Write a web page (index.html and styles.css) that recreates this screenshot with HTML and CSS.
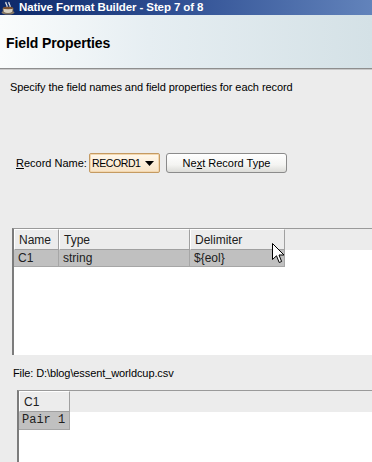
FILE: index.html
```html
<!DOCTYPE html>
<html>
<head>
<meta charset="utf-8">
<link rel="stylesheet" href="styles.css">
</head>
<body>
<div class="window">
  <div class="titlebar">
    <svg class="appicon" width="14" height="14" viewBox="0 0 14 14">
      <path d="M5 1 C4 3 7 4 6 6" stroke="#e8e8e8" stroke-width="1.3" fill="none"/>
      <path d="M8 1 C7 3 10 4 9 6" stroke="#e8e8e8" stroke-width="1.3" fill="none"/>
      <ellipse cx="7" cy="11.5" rx="6.5" ry="2" fill="#8a7a66"/>
      <path d="M2 7 H12 V9 C12 11.5 10 12.5 7 12.5 C4 12.5 2 11.5 2 9 Z" fill="#d8d0c0" stroke="#6a5a48" stroke-width="0.8"/>
      <ellipse cx="7" cy="7" rx="5" ry="1.2" fill="#7a5030"/>
    </svg>
    <span class="title">Native Format Builder - Step 7 of 8</span>
  </div>
  <div class="header">
    <h1 class="page-title">Field Properties</h1>
  </div>
  <div class="content">
    <p class="intro">Specify the field names and field properties for each record</p>
    <div class="record-row">
      <label class="label"><u>R</u>ecord Name:</label>
      <div class="combo">
        <span class="combo-text">RECORD1</span>
        <svg class="combo-arrow" width="9" height="5" viewBox="0 0 9 5"><path d="M0 0 H9 L4.5 5 Z" fill="#000"/></svg>
      </div>
      <button class="btn">Ne<u>x</u>t Record Type</button>
    </div>
    <div class="grid">
      <div class="grid-head">
        <div class="hcell c-name">Name</div>
        <div class="hcell c-type">Type</div>
        <div class="hcell c-delim">Delimiter</div>
      </div>
      <div class="grid-row">
        <div class="dcell c-name">C1</div>
        <div class="dcell c-type">string</div>
        <div class="dcell c-delim">${eol}</div>
      </div>
    </div>
    <p class="file">File: D:\blog\essent_worldcup.csv</p>
    <div class="grid preview">
      <div class="grid-head">
        <div class="hcell c-col">C1</div>
      </div>
      <div class="grid-row">
        <div class="dcell c-col mono">Pair 1</div>
      </div>
    </div>
  </div>
  <svg class="cursor" width="13" height="21" viewBox="0 0 13 21">
    <path d="M0.5 0.5 L0.5 16.5 L4.5 12.8 L7.2 19.5 L9.6 18.5 L7 12 L12 12 Z" fill="#fff" stroke="#000" stroke-width="1"/>
  </svg>
</div>
</body>
</html>
```
FILE: styles.css
```css
html, body {
  margin: 0;
  padding: 0;
}
body {
  width: 372px;
  height: 462px;
  overflow: hidden;
  background: #ececec;
  font-family: "Liberation Sans", Arial, sans-serif;
  color: #000;
}
.window {
  position: relative;
  width: 372px;
  height: 462px;
  overflow: hidden;
}
.titlebar {
  height: 15px;
  display: flex;
  align-items: center;
  gap: 4px;
  padding-left: 1px;
  background: linear-gradient(to right, #0c2868 0%, #2e4e92 45%, #6283bb 100%);
}
.appicon {
  flex: none;
}
.title {
  color: #fff;
  font-weight: bold;
  font-size: 11.5px;
  letter-spacing: -0.1px;
  line-height: 15px;
  white-space: nowrap;
}
.header {
  height: 53px;
  background: linear-gradient(to right, #fafcfc 0%, #e6eef2 40%, #d4e1e6 100%);
  border-bottom: 1px solid #8e8e8e;
  box-shadow: 0 1px 0 #c8c8c8;
  display: flex;
  align-items: center;
}
.page-title {
  margin: 3px 0 0 6px;
  font-size: 14px;
  font-weight: bold;
  letter-spacing: -0.1px;
}
.content {
  padding-top: 1px;
}
.intro {
  margin: 10px 0 0 10px;
  font-size: 11px;
  line-height: 14px;
  letter-spacing: -0.08px;
  white-space: nowrap;
}
.record-row {
  display: flex;
  align-items: center;
  margin: 59px 0 0 16px;
  height: 20px;
}
.label {
  font-size: 11px;
  width: 73px;
  flex: none;
}
.combo {
  box-sizing: border-box;
  width: 71px;
  height: 20px;
  border: 1px solid #c49a62;
  border-radius: 2px;
  background: linear-gradient(#fff8ec, #f7e3c6);
  display: flex;
  align-items: center;
  justify-content: space-between;
  padding: 0 5px 0 2px;
  box-shadow: inset 0 0 0 1px #f3d7ae;
}
.combo-text {
  font-size: 10.5px;
  letter-spacing: -0.4px;
}
.combo-arrow {
  margin-top: 1px;
}
.btn {
  box-sizing: border-box;
  margin-left: 6px;
  width: 121px;
  height: 20px;
  border: 1px solid #8b8b8b;
  border-radius: 3px;
  background: linear-gradient(#ffffff 0%, #f4f4f2 60%, #dcdcd8 100%);
  font-family: "Liberation Sans", Arial, sans-serif;
  font-size: 11px;
  color: #000;
  padding: 0;
}
.grid {
  margin: 55px 0 0 12px;
  width: 380px;
  height: 127px;
  background: #fff;
  border-top: 1px solid #9a9a9a;
  border-left: 2px solid #7c7c7c;
  box-sizing: border-box;
  font-size: 12px;
}
.grid-head {
  display: flex;
  height: 21px;
  background: #ececec;
}
.hcell {
  box-sizing: border-box;
  height: 21px;
  line-height: 20px;
  padding-left: 4px;
  border-top: 1px solid #fff;
  border-left: 1px solid #fff;
  border-right: 1px solid #a0a0a0;
  border-bottom: 1px solid #a0a0a0;
  color: #202020;
}
.grid-row {
  display: flex;
  height: 17px;
}
.dcell {
  box-sizing: border-box;
  height: 17px;
  line-height: 16px;
  padding-left: 4px;
  background: #c0c0c0;
  border-right: 1px solid #a6a6a6;
  border-bottom: 1px solid #a6a6a6;
  color: #202020;
}
.c-name { width: 45px; }
.c-type { width: 131px; }
.c-delim { width: 95px; }
.file {
  margin: 11px 0 0 13px;
  font-size: 11px;
  line-height: 14px;
  letter-spacing: -0.1px;
}
.grid.preview {
  margin: 10px 0 0 17px;
  height: 80px;
}
.c-col { width: 51px; }
.mono {
  font-family: "Liberation Mono", "Courier New", monospace;
  font-size: 12px;
  padding-left: 3px;
  height: 18px;
  line-height: 17px;
}
.preview .grid-row {
  height: 18px;
}
.cursor {
  position: absolute;
  left: 272px;
  top: 243px;
}
```
